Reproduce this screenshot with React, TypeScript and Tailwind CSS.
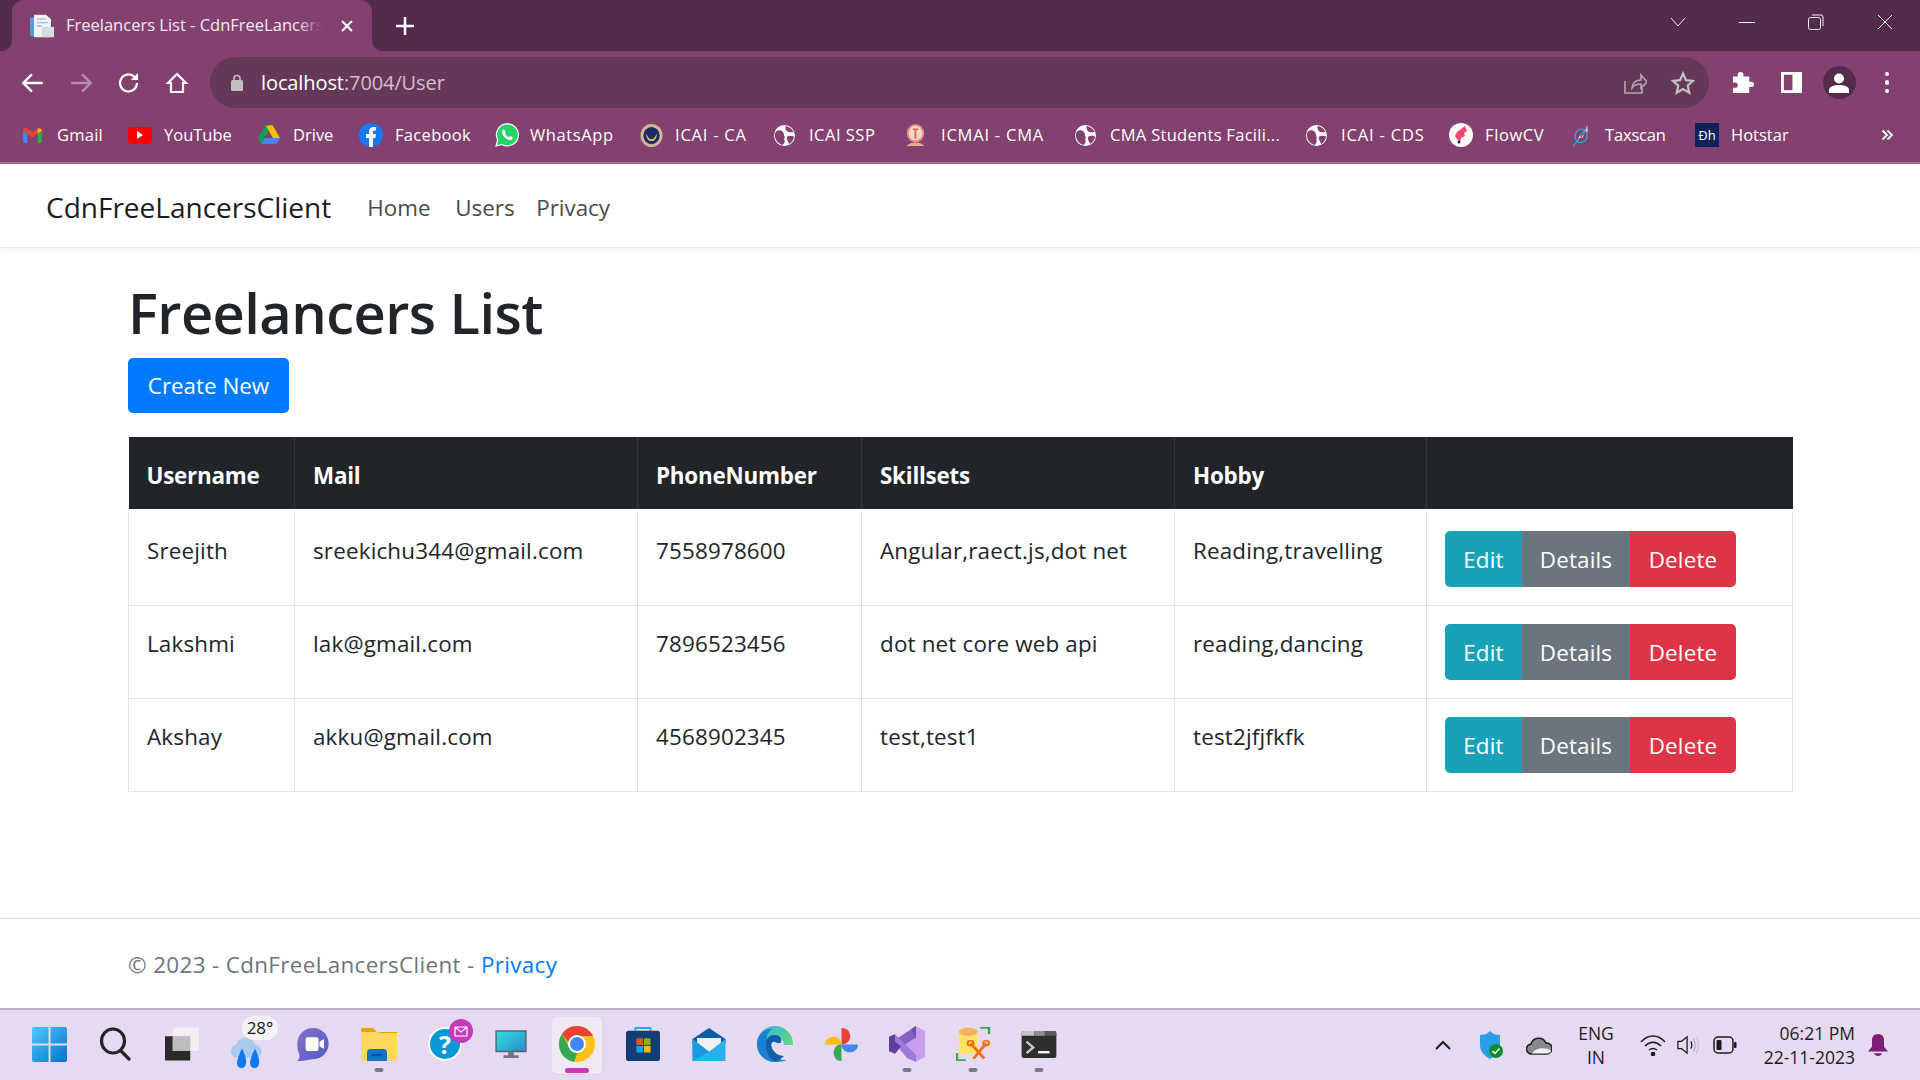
import React from "react";

const Globe = () => (
  <svg width="21" height="21" viewBox="0 0 22 22"><circle cx="11" cy="11" r="11" fill="#fff" /><path d="M2 7c2-2 5-2 7 0s1 3 2 5-1 2 0 4-1 4-2 5C5 20 1 16 1 11c0-1 0-3 1-4zM12 1c4 .5 7 3 8.500 6-2 .5-4 1-6 0s-3-4-2.500-6zM14 12c2-1 4-1 7 0-.5 3-2 6-5 8-1-3-4-6-2-8z" fill="#834170" /></svg>
);

const bookmarks: { n: string; w: string; g: string; t: string; i: React.ReactNode }[] = [
  { n: "Gmail", w: "w-[106px]", g: "gap-[14px]", t: "tracking-[0.015em]", i: <svg width="21" height="17" viewBox="0 0 22 20"><path d="M0 4v13q0 2 2 2h3V8z" fill="#4285f4" /><path d="M22 4v13q0 2-2 2h-3V8z" fill="#34a853" /><path d="M0 4l11 8 11-8q0-4-4-3l-7 5-7-5Q0 0 0 4z" fill="#ea4335" /><path d="M17 8V3q3-3 5 1z" fill="#fbbc04" /></svg> },
  { n: "YouTube", w: "w-[130px]", g: "gap-[12px]", t: "tracking-normal", i: <div className="flex h-[17px] w-[24px] items-center justify-center rounded-[4px] bg-[#fe0000]"><div className="h-0 w-0 border-y-[4px] border-l-[6px] border-y-transparent border-l-white" /></div> },
  { n: "Drive", w: "w-[101px]", g: "gap-[13px]", t: "tracking-normal", i: <svg width="22" height="20" viewBox="0 0 22 20"><path d="M7.500 0h7L8 11H1z" fill="#0f9d58" /><path d="M14.500 0L22 13h-7L8 1z" fill="#fbbc04" /><path d="M6 13h16l-3.500 6H3z" fill="#4285f4" /><path d="M0 13l3.500-6L7 13l-3.500 6z" fill="#0f9d58" /></svg> },
  { n: "Facebook", w: "w-[136px]", g: "gap-[12px]", t: "tracking-[0.02em]", i: <div className="flex h-[24px] w-[24px] items-end justify-center overflow-hidden rounded-full bg-[#1877f2]"><svg width="12" height="21" viewBox="0 0 12 21"><path d="M4 21V12H1V8h3V5.500C4 2.500 6 1 8.500 1H11v3.500H9.500C8 4.500 8 5.500 8 6.500V8h3l-.6 4H8v9z" fill="#fff" /></svg></div> },
  { n: "WhatsApp", w: "w-[145px]", g: "gap-[11px]", t: "tracking-[0.037em]", i: <svg width="24" height="24" viewBox="0 0 24 24"><path d="M1 23l1.700-6A11 11 0 1 1 7 21.400z" fill="#25d366" stroke="#fff" strokeWidth="1.200" /><path d="M8 6.500c-1 1-1.500 2.500-.5 4.500s3.500 5 6.500 6c1.500.5 3 0 3.500-1.500l.2-1.200-2.700-1.300-1 1.200c-1.500-.5-3-2-4-3.700l.8-1-1.200-2.800z" fill="#fff" /></svg> },
  { n: "ICAI - CA", w: "w-[134px]", g: "gap-[12px]", t: "tracking-[0.047em]", i: <svg width="23" height="23" viewBox="0 0 23 24"><ellipse cx="11.500" cy="12" rx="11.500" ry="12" fill="#cdb89a" /><ellipse cx="11.500" cy="12" rx="8.500" ry="9" fill="#1d2a66" /><path d="M6 10c2 4 3 6 5.500 6S15 14 17 10c0 5-2 8-5.500 8S6 15 6 10z" fill="#e2c24e" /></svg> },
  { n: "ICAI SSP", w: "w-[131px]", g: "gap-[14px]", t: "tracking-[0.03em]", i: <Globe /> },
  { n: "ICMAI - CMA", w: "w-[170px]", g: "gap-[15px]", t: "tracking-[0.047em]", i: <svg width="21" height="23" viewBox="0 0 22 25"><ellipse cx="11" cy="10" rx="8.500" ry="9" fill="#f6d4c8" stroke="#e38c78" strokeWidth="2" /><path d="M10 5h2v11h-2zM8 5h6v1.500H8z" fill="#d8654d" /><path d="M1 24c3-3 6-4 10-4s7 1 10 4z" fill="#eda898" /></svg> },
  { n: "CMA Students Facili...", w: "w-[231px]", g: "gap-[14px]", t: "tracking-[0.018em]", i: <Globe /> },
  { n: "ICAI - CDS", w: "w-[143px]", g: "gap-[14px]", t: "tracking-[0.05em]", i: <Globe /> },
  { n: "FlowCV", w: "w-[123px]", g: "gap-[12px]", t: "tracking-[0.037em]", i: <div className="flex h-[24px] w-[24px] items-center justify-center rounded-full bg-white"><svg width="14" height="18" viewBox="0 0 14 18"><path d="M3 6l8-6 2 5-3 2 1 3-4 2-1 4-3-3-2-3z" fill="#f5476e" /><circle cx="5" cy="16" r="1.500" fill="#2b1a55" /></svg></div> },
  { n: "Taxscan", w: "w-[123px]", g: "gap-[13px]", t: "tracking-[-0.01em]", i: <svg width="20" height="24" viewBox="0 0 22 28"><ellipse cx="10" cy="15" rx="7" ry="8" fill="none" stroke="#2aa7dc" strokeWidth="1.600" transform="rotate(20 10 15)" /><path d="M1 27L14 8" stroke="#2aa7dc" strokeWidth="1.400" /><path d="M6 18l3-4 1 3 3-4 4-11 1 9-3-2-3 8z" fill="#c9c6cb" /></svg> },
  { n: "Hotstar", w: "w-[186px]", g: "gap-[12px]", t: "tracking-normal", i: <div className="flex h-[24px] w-[24px] items-center justify-center bg-[#0f2257] text-[13px] leading-none text-white">Ðh</div> },
];

const Slot = ({ c, children }: { c: string; children: React.ReactNode }) => <div className={`flex shrink-0 items-center justify-center ${c}`}>{children}</div>;

const IconB = ({ d, w = 2, c = "#fff", s = 24 }: { d: string; w?: number; c?: string; s?: number }) => (
  <svg width={s} height={s} viewBox="0 0 24 24" fill="none" stroke={c} strokeWidth={w}><path d={d} /></svg>
);

const Task = ({ children, dot }: { children: React.ReactNode; dot?: boolean }) => (
  <div className="relative flex h-[70px] w-[66px] shrink-0 items-center justify-center pb-[2px]">
    {children}
    {dot && <div className="absolute bottom-[8px] left-1/2 h-[4px] w-[9px] -translate-x-1/2 rounded-full bg-[#7d7985]" />}
  </div>
);

const taskIcons: { k: string; dot?: boolean; i: React.ReactNode }[] = [
  { k: "win", i: <svg width="35" height="35" viewBox="0 0 36 36"><defs><linearGradient id="w" x1="0" y1="0" x2="1" y2="1"><stop offset="0" stopColor="#4dcaf8" /><stop offset="1" stopColor="#0470cc" /></linearGradient></defs><path d="M0 2q0-2 2-2h15v17H0zM19 0h15q2 0 2 2v15H19zM0 19h17v17H2q-2 0-2-2zM19 19h17v15q0 2-2 2H19z" fill="url(#w)" /></svg> },
  { k: "search", i: <svg width="32" height="34" viewBox="0 0 32 34" fill="none" stroke="#242424" strokeWidth="3.200"><ellipse cx="14" cy="14" rx="11.500" ry="12" /><path d="M22 24l8 8" strokeLinecap="round" /></svg> },
  { k: "task", i: <svg width="35" height="34" viewBox="0 0 36 34"><path d="M1 9h26v25H1z" fill="#2a2a2a" /><path d="M9 0h27v24H9z" fill="#f4f2f6" fillOpacity="0.85" /><path d="M9 9h18v15H9z" fill="#bdbdbd" /></svg> },
  { k: "weather", i: <div className="relative h-[44px] w-[44px]"><svg className="absolute bottom-[-4px] left-[4px]" width="36" height="33" viewBox="0 0 36 32"><path d="M6 20a7 7 0 0 1 1-13 10 10 0 0 1 19 0 7 7 0 0 1 3 13z" fill="#a6cbec" /><path d="M13 11q5 10 4 15a4 4 0 0 1-9 0q0-5 5-15zM26 11q5 10 4 15a4 4 0 0 1-9 0q0-5 5-15z" fill="#0f78f0" /></svg><div className="absolute left-[17px] top-[-6px] flex h-[24px] w-[36px] items-center justify-center rounded-full bg-[#f5f2f5] text-[17px] text-[#1a1a1a]">28°</div></div> },
  { k: "chat", i: <svg width="34" height="35" viewBox="0 0 36 38"><defs><linearGradient id="c" x1="0" y1="0" x2="1" y2="1"><stop offset="0" stopColor="#8b70ca" /><stop offset="1" stopColor="#4f5bc4" /></linearGradient></defs><path d="M18 1c10 0 17 8 17 17s-7 17-17 17c-4 0-8 2-17 2 3-3 3-6 1-10C1 24 1 21 1 18 1 9 8 1 18 1z" fill="url(#c)" /><rect x="10" y="11" width="14" height="15" rx="2" fill="#fff" /><path d="M25 16l5-3v11l-5-3z" fill="#fff" /></svg> },
  { k: "files", dot: true, i: <svg width="36" height="33" viewBox="0 0 36 33"><path d="M0 2q0-2 2-2h10l4 4h20v4H0z" fill="#e0a106" /><path d="M0 4h16l4 1h16v28H0z" fill="#ffd75e" /><path d="M6 25q0-4 4-4h12q4 0 4 4v8H6z" fill="#0f74c6" /><path d="M11 27h10" stroke="#07498a" strokeWidth="1.500" /></svg> },
  { k: "help", i: <div className="relative h-[34px] w-[34px]"><div className="flex h-[34px] w-[34px] items-center justify-center rounded-full border-[2px] border-white bg-[#0a97d6] text-[25px] font-bold leading-none text-white">?</div><div className="absolute right-[-11px] top-[-8px] flex h-[24px] w-[24px] items-center justify-center rounded-full bg-[#c639b8]"><svg width="14" height="11" viewBox="0 0 14 11" fill="none" stroke="#fff" strokeWidth="1.200"><path d="M1 1h12v9H1zM1 1l6 5 6-5" /></svg></div></div> },
  { k: "pc", i: <svg width="32" height="28" viewBox="0 0 34 30"><defs><linearGradient id="p" x1="0" y1="0" x2="1" y2="1"><stop offset="0" stopColor="#2fe0df" /><stop offset="1" stopColor="#2f89c9" /></linearGradient></defs><path d="M1 1h32v22H1z" fill="url(#p)" stroke="#57646e" strokeWidth="1.500" /><path d="M14 23h6v5h-6zM9 27h16v3H9z" fill="#6d7880" /></svg> },
  { k: "chrome", i: <div className="relative mt-[2px] flex h-[57px] w-[50px] items-center justify-center rounded-[5px] bg-[#f0e9f5] pb-[2px] shadow-[3px_0_0_#e0d7e8,0_1px_1px_#d8cfe0]"><svg width="36" height="36" viewBox="0 0 36 36"><circle cx="18" cy="18" r="18" fill="#fbc116" /><path d="M18 0c7 0 13 4 16 10H18c-4 0-7 3-8 7L3 8c3-5 9-8 15-8z" fill="#ea4335" /><path d="M3 8l7 13c2 3 5 5 9 4l-4 11C6 34 0 27 0 18 0 14 1 11 3 8z" fill="#34a853" /><circle cx="18" cy="18" r="9" fill="#fff" /><circle cx="18" cy="18" r="7" fill="#4285f4" /></svg><div className="absolute bottom-[1px] left-1/2 h-[5px] w-[24px] -translate-x-1/2 rounded-full bg-[#c639b8]" /></div> },
  { k: "store", i: <svg width="34" height="34" viewBox="0 0 36 36"><path d="M10 6V1h16v5" fill="none" stroke="#2aa7dc" strokeWidth="2" /><rect x="0" y="4" width="36" height="32" rx="3" fill="#123f73" /><path d="M11 12h7v7h-7z" fill="#f25022" /><path d="M19 12h7v7h-7z" fill="#7fba00" /><path d="M11 20h7v7h-7z" fill="#00a4ef" /><path d="M19 20h7v7h-7z" fill="#ffb900" /></svg> },
  { k: "mail", i: <svg width="36" height="33" viewBox="0 0 36 36"><path d="M0 12L18 0l18 12v5H0z" fill="#0c5ea8" /><path d="M5 11h26v8L18 26 5 19z" fill="#f2f2f2" /><path d="M0 12l18 14 18-14v24H0z" fill="#2ab0ec" /><path d="M0 12l18 14-18 10z" fill="#1a9be0" /></svg> },
  { k: "edge", i: <svg width="36" height="36" viewBox="0 0 36 36"><defs><linearGradient id="e" x1="0" y1="0" x2="1" y2="0.800"><stop offset="0" stopColor="#2fb4e8" /><stop offset="1" stopColor="#6ae06a" /></linearGradient></defs><circle cx="18" cy="18" r="18" fill="url(#e)" /><path d="M10 19c0-6 5-9 10-8 5 1 7 5 7 8h9c0 6-2 10-5 13-5 3-11 4-16 0-3-3-5-8-5-13z" fill="#e7dbf3" /><path d="M0 18C0 8 8 2 16 3c-5 2-7 7-6 13 1 9 9 19 20 18-3 1-7 2-12 2C8 36 0 28 0 18z" fill="#1c7fd0" /><path d="M9 17c0-5 4-8 9-8 5 0 7 4 6 7-1 2-4 1-6 0-2-1-5 1-3 6 2 5 7 8 12 8-3 3-6 5-10 5-6-3-8-11-8-18z" fill="#0f5ea8" /></svg> },
  { k: "photos", i: <svg width="33" height="33" viewBox="0 0 34 38" preserveAspectRatio="none"><path d="M17 19V0c5 0 9 4 9 9.500S22 19 17 19z" fill="#ea4335" /><path d="M17 19H0c0-5 3.500-9 8.500-9S17 14 17 19z" fill="#fbbc04" /><path d="M17 19v19c-5 0-8-4-8-9.500S12 19 17 19z" fill="#34a853" /><path d="M17 19h17c0 5-3.500 9-8.500 9S17 24 17 19z" fill="#4285f4" /></svg> },
  { k: "vs", dot: true, i: <svg width="36" height="36" viewBox="0 0 36 44" preserveAspectRatio="none"><path d="M27 0l9 6v32l-9 6-18-20z" fill="#c7a0ec" /><path d="M27 0v14L14 24 6 17z" fill="#8661c5" /><path d="M0 13l6-3 21 25v9l-9-5z" fill="#9d7bdb" /><path d="M0 13v18l6 3 6-9-6-6 0-9z" fill="#5e3f9f" /><path d="M27 0l-5 4 5 10z" fill="#6a4bb0" /></svg> },
  { k: "sql", dot: true, i: <svg width="35" height="34" viewBox="0 0 36 42" preserveAspectRatio="none"><path d="M3 5h19v28H3z" fill="#ffe364" /><ellipse cx="12.500" cy="6" rx="9.500" ry="5" fill="#f3b15c" /><path d="M25 1h9v8M1 32v9h9" fill="none" stroke="#3fa34d" strokeWidth="2.500" /><path d="M15 20l14 19M31 20L18 39" stroke="#ef6c00" strokeWidth="3" /><circle cx="15" cy="20" r="3" fill="none" stroke="#ef6c00" strokeWidth="2" /><circle cx="31" cy="20" r="3" fill="none" stroke="#ef6c00" strokeWidth="2" /></svg> },
  { k: "term", dot: true, i: <svg width="36" height="27" viewBox="0 0 36 28"><rect width="36" height="28" rx="2" fill="#2e2e2e" /><path d="M2 0h11v5H0V2q0-2 2-2z" fill="#c4c4c4" /><path d="M13 0h11v5H13z" fill="#8e8e8e" /><path d="M24 0h10q2 0 2 2v3H24z" fill="#5a5a5a" /><path d="M5 11l7 6-7 6" fill="none" stroke="#c9c9c9" strokeWidth="2.500" /><path d="M17 22h12" stroke="#f2f2f2" strokeWidth="2.500" /></svg> },
];

const rows = [
  ["Sreejith", "sreekichu344@gmail.com", "7558978600", "Angular,raect.js,dot net", "Reading,travelling"],
  ["Lakshmi", "lak@gmail.com", "7896523456", "dot net core web api", "reading,dancing"],
  ["Akshay", "akku@gmail.com", "4568902345", "test,test1", "test2jfjfkfk"],
];
const heads = ["Username", "Mail", "PhoneNumber", "Skillsets", "Hobby", ""];

export default function App() {
  return (
    <div className="flex h-screen w-full flex-col overflow-hidden bg-white font-['Open_Sans','Noto_Sans',sans-serif] text-[#212529]">
      {/* tab strip */}
      <div className="flex h-[51px] shrink-0 items-stretch bg-[#552b4b] pl-[12px]">
        <div className="relative flex w-[360px] items-center rounded-t-[12px] bg-[#834170] pl-[18px] text-white">
          <div className="absolute bottom-0 left-[-10px] h-[10px] w-[10px] bg-[#834170]"><div className="h-full w-full rounded-br-[10px] bg-[#552b4b]" /></div>
          <div className="absolute bottom-0 right-[-10px] h-[10px] w-[10px] bg-[#834170]"><div className="h-full w-full rounded-bl-[10px] bg-[#552b4b]" /></div>
          <svg width="24" height="24" viewBox="0 0 24 28" preserveAspectRatio="none" className="shrink-0"><path d="M0 4h5v22H0z" fill="#5a9bd4" /><path d="M4 1h12l5 5v21H4z" fill="#eef1f5" /><path d="M7 6h9M7 10h11M7 14h5" stroke="#a7bad0" strokeWidth="1.500" /><path d="M12 15h12v12H12z" fill="#d4dbe3" /></svg>
          <div className="relative ml-[12px] w-[256px] overflow-hidden whitespace-nowrap text-[16.500px] text-[#f3e9f0]">
            Freelancers List - CdnFreeLancersClient
            <div className="absolute inset-y-0 right-0 w-[24px] bg-gradient-to-r from-transparent to-[#834170]" />
          </div>
          <svg width="14" height="14" viewBox="0 0 14 14" className="ml-[18px]" stroke="#fff" strokeWidth="2"><path d="M2 2l10 10M12 2L2 12" /></svg>
        </div>
        <svg width="20" height="20" viewBox="0 0 20 20" className="ml-[23px] mt-[16px]" stroke="#fff" strokeWidth="2.500"><path d="M10 1v18M1 10h18" /></svg>
        <div className="ml-auto flex items-start pt-[8px]">
          <Slot c="w-[69px] h-[28px]"><svg width="16" height="10" viewBox="0 0 16 10" fill="none" stroke="#eee" strokeWidth="1"><path d="M1 1l7 8 7-8" /></svg></Slot>
          <Slot c="w-[69px] h-[28px]"><div className="h-[1px] w-[16px] bg-white" /></Slot>
          <Slot c="w-[69px] h-[28px]"><svg width="16" height="16" viewBox="0 0 16 16" fill="none" stroke="#eee" strokeWidth="1"><rect x="0.500" y="3.500" width="12" height="12" rx="2" /><path d="M4 1h9q2 0 2 2v9" /></svg></Slot>
          <Slot c="w-[70px] h-[28px]"><svg width="16" height="16" viewBox="0 0 16 16" stroke="#fff" strokeWidth="1"><path d="M1 1l14 14M15 1L1 15" /></svg></Slot>
        </div>
      </div>

      {/* toolbar */}
      <div className="flex h-[57px] shrink-0 items-start bg-[#834170] pl-[9px] pt-[6px]">
        <div className="flex h-[51px] items-center">
          <Slot c="w-[48px]"><IconB s={26} w={2.200} d="M21 12H4M11 4l-8 8 8 8" /></Slot>
          <Slot c="w-[48px]"><IconB s={26} w={2.200} c="#b78da9" d="M3 12h17M13 4l8 8-8 8" /></Slot>
          <Slot c="w-[48px]"><svg width="24" height="24" viewBox="0 0 24 24" fill="none" stroke="#fff" strokeWidth="2.200"><path d="M20 12a8.500 8.500 0 1 1-3-6.500L20 8" /><path d="M21 2v7h-7z" fill="#fff" stroke="none" /></svg></Slot>
          <Slot c="w-[48px]"><IconB s={24} w={2.200} d="M12 3L3 12h3v9h12v-9h3z" /></Slot>
        </div>
        <div className="ml-[9px] flex h-[51px] w-[1499px] items-center rounded-full bg-[#663858] pl-[21px]">
          <svg width="12" height="17" viewBox="0 0 12 17" className="shrink-0"><path d="M3 7V4.500a3 3 0 0 1 6 0V7" fill="none" stroke="#c5bfc4" strokeWidth="1.500" /><rect y="6" width="12" height="11" rx="1.500" fill="#c5bfc4" /></svg>
          <div className="ml-[18px] text-[20px] tracking-[-0.005em] text-white">localhost<span className="text-[#d4bdcd]">:7004/User</span></div>
          <div className="ml-auto flex items-center pr-[2px]">
            <Slot c="w-[48px]"><svg width="24" height="24" viewBox="0 0 24 24" fill="none" stroke="#b7a3b2" strokeWidth="1.600"><path d="M2 10v12h17v-6M9 17c0-5 4-8 9-8V4l6 7-6 6v-4c-4 0-7 1-9 4z" /></svg></Slot>
            <Slot c="w-[48px]"><svg width="24" height="24" viewBox="0 0 24 24" fill="none" stroke="#c5bfc4" strokeWidth="2.200"><path d="M12 2.500l3 6.700 7 .7-5.300 4.700 1.600 7.100L12 18l-6.300 3.700 1.600-7.100L2 9.900l7-.7z" /></svg></Slot>
          </div>
        </div>
        <div className="ml-[10px] flex h-[51px] items-center">
          <Slot c="w-[48px]"><svg width="22" height="22" viewBox="0 0 23 25" preserveAspectRatio="none" fill="#fff"><path d="M9 0a3 3 0 0 1 3 3v2h6v6h2a3 3 0 0 1 0 6h-2v7H1v-6h2a3 3 0 0 0 0-6H1V5h5V3a3 3 0 0 1 3-3z" /></svg></Slot>
          <Slot c="w-[48px]"><svg width="21" height="21" viewBox="0 0 22 22" fill="#fff"><path d="M0 0h22v22H0zM3 3v16h9V3z" fillRule="evenodd" /></svg></Slot>
          <Slot c="w-[48px]"><div className="flex h-[33px] w-[33px] items-center justify-center rounded-full bg-[#552b4b]"><svg width="20" height="20" viewBox="0 0 20 20" fill="#fff"><circle cx="10" cy="5.500" r="5" /><path d="M0 20v-3c0-4 6-5 10-5s10 1 10 5v3z" /></svg></div></Slot>
          <Slot c="w-[48px]"><div className="flex flex-col gap-[4px]"><div className="h-[4.500px] w-[4.500px] rounded-full bg-white" /><div className="h-[4.500px] w-[4.500px] rounded-full bg-white" /><div className="h-[4.500px] w-[4.500px] rounded-full bg-white" /></div></Slot>
        </div>
      </div>

      {/* bookmarks */}
      <div className="flex h-[56px] shrink-0 items-center border-b-[2px] border-[#9c6b8e] bg-[#834170] pl-[22px] text-[16.500px] text-white">
        {bookmarks.map((b) => (
          <div key={b.n} className={`flex shrink-0 items-center whitespace-nowrap ${b.w} ${b.g}`}>
            {b.i}
            <span className={b.t}>{b.n}</span>
          </div>
        ))}
        <svg width="12" height="12" viewBox="0 0 12 12" fill="none" stroke="#fff" strokeWidth="1.800"><path d="M1.500 1.500L6 6l-4.500 4.500M6.500 1.500L11 6l-4.500 4.500" /></svg>
      </div>

      {/* navbar */}
      <div className="flex h-[84px] shrink-0 items-center border-b border-[#e5e5e5] pl-[46px] pt-[3px] shadow-[0_3px_6px_rgba(0,0,0,0.05)]">
        <span className="text-[28px] text-[#1c1c1c]">CdnFreeLancersClient</span>
        <nav className="ml-[36px] flex pt-[1px] text-[22.400px] text-[#4a4a4a]">
          <span className="w-[88px]">Home</span>
          <span className="w-[81px]">Users</span>
          <span>Privacy</span>
        </nav>
      </div>

      {/* main */}
      <main className="flex-1 px-[128px] pt-[31px]">
        <h1 className="h-[67px] text-[56px] font-semibold leading-[67px] tracking-[-0.01em]">Freelancers List</h1>
        <a className="mt-[12px] flex h-[55px] w-[161px] items-center justify-center rounded-[5px] bg-[#007bff] text-[22.400px] text-white">Create New</a>
        <table className="mt-[24px] w-[1664px] table-fixed border-collapse text-[22.400px] tracking-[0.008em]">
          <colgroup>
            <col className="w-[166px]" />
            <col className="w-[343px]" />
            <col className="w-[224px]" />
            <col className="w-[313px]" />
            <col className="w-[252px]" />
            <col className="w-[366px]" />
          </colgroup>
          <thead>
            <tr className="h-[73px] border-b-[3px] border-white bg-[#212529] text-white">
              {heads.map((h, i) => (
                <th key={i} className={`px-[18px] pt-[6px] text-left font-bold tracking-[-0.01em] ${i < 5 ? "border-r border-[#32383e]" : ""}`}>{h}</th>
              ))}
            </tr>
          </thead>
          <tbody>
            {rows.map((r, n) => (
              <tr key={r[0]} className={n === 0 ? "h-[95px]" : "h-[93px]"}>
                {r.map((c) => (
                  <td key={c} className={`border border-[#dee2e6] px-[18px] align-top leading-[44px] ${n === 0 ? "pb-[16px] pt-[17px]" : "pb-[17px] pt-[16px]"}`}>{c}</td>
                ))}
                <td className={`border border-[#dee2e6] px-[18px] align-middle ${n === 0 ? "pb-0 pt-[2px]" : "py-0"}`}>
                  <div className="flex h-[56px] w-[291px] text-white">
                    <a className="flex w-[77px] items-center justify-center rounded-l-[5px] bg-[#17a2b8] pt-[2px]">Edit</a>
                    <a className="flex w-[108px] items-center justify-center bg-[#6c757d] pt-[2px]">Details</a>
                    <a className="flex w-[106px] items-center justify-center rounded-r-[5px] bg-[#dc3545] pt-[2px]">Delete</a>
                  </div>
                </td>
              </tr>
            ))}
          </tbody>
        </table>
      </main>

      {/* footer */}
      <footer className="flex h-[90px] shrink-0 items-center border-t border-[#dee2e6] pl-[128px] pt-[3px] text-[22.400px] tracking-[0.016em] text-[#6c757d]">
        <span>© 2023 - CdnFreeLancersClient - <span className="text-[#007bff]">Privacy</span></span>
      </footer>

      {/* taskbar */}
      <div className="flex h-[72px] shrink-0 items-center border-t-[2px] border-[#bdb3c6] bg-[#e6daf2] pl-[16px]">
        {taskIcons.map((t) => <Task key={t.k} dot={t.dot}>{t.i}</Task>)}
        <div className="ml-auto flex items-center pr-[19px] text-[17.500px] text-[#1c1c1c]">
          <Slot c="w-[48px]"><svg width="16" height="10" viewBox="0 0 16 10" fill="none" stroke="#1c1c1c" strokeWidth="2"><path d="M1 9l7-7 7 7" /></svg></Slot>
          <Slot c="w-[48px]"><svg width="24" height="28" viewBox="0 0 24 28"><path d="M11 0c3 3 6 4 10 4v10c0 7-5 11-10 14C6 25 1 21 1 14V4c4 0 7-1 10-4z" fill="#2b9de8" /><circle cx="17" cy="20" r="7" fill="#0e8a2f" /><path d="M13.500 20l2.500 2.500 4.500-5" fill="none" stroke="#fff" strokeWidth="1.500" /></svg></Slot>
          <Slot c="w-[48px]"><svg width="26" height="20" viewBox="0 0 26 20"><path d="M6 19a5 5 0 0 1-1-10 8 8 0 0 1 15-1 5.500 5.500 0 0 1 1 11z" fill="#8a8a8a" stroke="#1c1c1c" strokeWidth="1.500" /><path d="M6 18.500c3-5 12-7 19-3q0 3-4 3z" fill="#f0f0f0" /></svg></Slot>
          <div className="flex w-[66px] shrink-0 flex-col items-center leading-[24px]"><span>ENG</span><span>IN</span></div>
          <Slot c="w-[48px]"><svg width="26" height="22" viewBox="0 0 26 22" fill="none" stroke="#1c1c1c" strokeWidth="1.500"><path d="M1 8c7-8 17-8 24 0M5 12c5-5 11-5 16 0M9 16c2.500-2 5.500-2 8 0" /><circle cx="13" cy="20" r="1.500" fill="#1c1c1c" /></svg></Slot>
          <Slot c="w-[22px]"><svg width="24" height="22" viewBox="0 0 24 22" fill="none" stroke="#1c1c1c" strokeWidth="1.400"><path d="M1 7h4l6-5v18l-6-5H1z" /><path d="M15 7c1.500 2 1.500 6 0 8" /><path d="M18 4c2.500 4 2.500 10 0 14" stroke="#b5acbd" /><path d="M21 2c3 5 3 13 0 18" stroke="#c8c0cf" /></svg></Slot>
          <Slot c="w-[52px]"><svg width="24" height="18" viewBox="0 0 24 18"><rect x="1" y="1" width="19" height="16" rx="4" fill="none" stroke="#1c1c1c" strokeWidth="1.500" /><rect x="3.500" y="4" width="5" height="10" rx="1" fill="#1c1c1c" /><rect x="21" y="6" width="2.500" height="6" rx="1" fill="#1c1c1c" /></svg></Slot>
          <div className="flex w-[104px] shrink-0 flex-col items-end whitespace-nowrap leading-[24px]"><span>06:21 PM</span><span>22-11-2023</span></div>
          <Slot c="w-[46px]"><svg width="20" height="22" viewBox="0 0 20 24" preserveAspectRatio="none" fill="#7d1d73"><path d="M10 0c4 0 6 3 6 7v7l4 5H0l4-5V7c0-4 2-7 6-7zM6 21h8q-1 3-4 3t-4-3z" /></svg></Slot>
        </div>
      </div>
    </div>
  );
}
